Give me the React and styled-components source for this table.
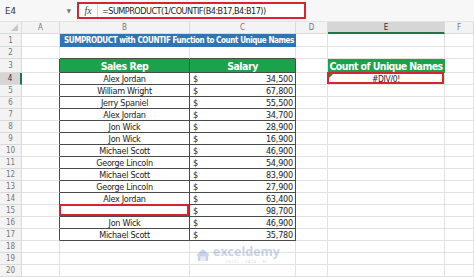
import React from "react";
import styled, { createGlobalStyle } from "styled-components";

const Global = createGlobalStyle`
  html, body { margin: 0; padding: 0; background: #fff; }
  body { width: 474px; height: 277px; overflow: hidden; }
`;

const FONT = `"Liberation Sans Narrow", "DejaVu Sans Condensed", Lato, sans-serif`;

const Page = styled.div`
  width: 474px;
  height: 277px;
  display: flex;
  flex-direction: column;
  background: #fff;
  font-family: ${FONT};
  overflow: hidden;
`;

const FormulaBar = styled.div`
  height: 22px;
  display: flex;
  align-items: center;
  background: #f7f7f7;
  border-bottom: 1px solid #e4e4e4;
  box-sizing: border-box;
`;

const NameBox = styled.div`
  width: 77px;
  height: 100%;
  display: flex;
  align-items: center;
  justify-content: space-between;
  padding: 0 6px 0 5px;
  box-sizing: border-box;
  font-size: 9.5px;
  color: #333;
`;

const Caret = styled.span`
  font-size: 6px;
  color: #777;
`;

const FormulaBox = styled.div`
  width: 229px;
  height: 17px;
  display: flex;
  align-items: center;
  border: 2px solid #d9232e;
  box-sizing: border-box;
  background: #fff;
`;

const Fx = styled.div`
  width: 18px;
  height: 100%;
  display: flex;
  align-items: center;
  justify-content: center;
  border-right: 1px solid #d4d4d4;
  font-family: "Liberation Serif", serif;
  font-style: italic;
  font-size: 10px;
  color: #444;
`;

const FormulaText = styled.div`
  padding-left: 4px;
  font-size: 9px;
  letter-spacing: -0.5px;
  color: #222;
  white-space: nowrap;
`;

const Grid = styled.div`
  flex: 1;
  display: grid;
  grid-template-columns: 22px 38px 130px 106px 32px 117px 1fr;
  grid-template-rows: 12px 13px 12px 14px repeat(17, 12px);
  position: relative;
`;

const ColHead = styled.div`
  background: ${(p) => (p.$sel ? "#d6d6d6" : "#f3f3f3")};
  border-right: 1px solid #dadada;
  border-bottom: ${(p) => (p.$sel ? "2px solid #217346" : "1px solid #dadada")};
  box-sizing: border-box;
  display: flex;
  align-items: center;
  justify-content: center;
  font-size: 8px;
  color: ${(p) => (p.$sel ? "#333" : "#777")};
  position: relative;
`;

const Corner = styled.div`
  position: absolute;
  right: 3px;
  bottom: 2px;
  width: 0;
  height: 0;
  border-left: 7px solid transparent;
  border-bottom: 7px solid #c8c8c8;
`;

const RowHead = styled.div`
  background: ${(p) => (p.$sel ? "#d6d6d6" : "#f3f3f3")};
  border-right: ${(p) => (p.$sel ? "2px solid #217346" : "1px solid #dadada")};
  border-bottom: 1px solid #dadada;
  box-sizing: border-box;
  display: flex;
  align-items: center;
  justify-content: center;
  font-size: 8px;
  color: ${(p) => (p.$sel ? "#333" : "#777")};
`;

const Cell = styled.div`
  box-sizing: border-box;
  border-right: 1px solid ${(p) => p.$br || "#e2e2e2"};
  border-bottom: 1px solid ${(p) => p.$bb || "#e2e2e2"};
  background: ${(p) => p.$bg || "#fff"};
  color: ${(p) => p.$color || "#222"};
  font-size: ${(p) => p.$size || 9}px;
  letter-spacing: ${(p) => (p.$ls === undefined ? -0.3 : p.$ls)}px;
  font-weight: ${(p) => (p.$bold ? 700 : 400)};
  display: flex;
  align-items: center;
  justify-content: ${(p) => p.$justify || "center"};
  padding: ${(p) => p.$pad || "0 2px"};
  white-space: nowrap;
  overflow: visible;
  position: relative;
  grid-column: ${(p) => p.$span || "auto"};
`;

const Dollar = styled.span`
  flex: 0 0 auto;
`;

const Amount = styled.span`
  margin-left: auto;
`;

const RedFrame = styled.div`
  position: absolute;
  left: -1px;
  top: -1px;
  right: 0;
  bottom: 0;
  border: 2px solid #d9232e;
  pointer-events: none;
`;

const ErrTri = styled.div`
  position: absolute;
  left: 1px;
  top: 1px;
  width: 0;
  height: 0;
  border-top: 4px solid #2e7d32;
  border-right: 4px solid transparent;
`;

const Watermark = styled.div`
  position: absolute;
  left: 195px;
  top: 224px;
  display: flex;
  align-items: center;
  gap: 2px;
  opacity: 0.32;
  pointer-events: none;
`;

const WmText = styled.div`
  display: flex;
  flex-direction: column;
  align-items: center;
  gap: 2px;
`;

const WmWord = styled.div`
  font-family: "Open Sans", sans-serif;
  font-weight: 700;
  font-size: 12.5px;
  line-height: 12px;
  color: #5b78b8;
`;

const WmTag = styled.div`
  font-family: "Open Sans", sans-serif;
  font-size: 3.5px;
  line-height: 4px;
  color: #5b78b8;
  letter-spacing: 0.8px;
`;

const GRID = "#e2e2e2";
const DARK = "#4a4a4a";
const GREEN = "#1aa34a";
const BLUE = "#2f75b5";

const rows = [
  ["Alex Jordan", "34,500"],
  ["William Wright", "67,800"],
  ["Jerry Spaniel", "55,500"],
  ["Alex Jordan", "34,700"],
  ["Jon Wick", "28,900"],
  ["Jon Wick", "16,900"],
  ["Michael Scott", "46,900"],
  ["George Lincoln", "54,900"],
  ["Michael Scott", "83,900"],
  ["George Lincoln", "27,900"],
  ["Alex Jordan", "63,400"],
  ["", "98,700"],
  ["Jon Wick", "46,900"],
  ["Michael Scott", "35,780"],
];

const cols = ["A", "B", "C", "D", "E", "F"];

export default function App() {
  const body = [];
  for (let r = 1; r <= 20; r++) {
    body.push(
      <RowHead key={`h${r}`} $sel={r === 4}>
        {r}
      </RowHead>
    );
    const inTable = r >= 3 && r <= 17;
    const aboveTable = r === 2;
    body.push(<Cell key={`a${r}`} $br={inTable ? DARK : GRID} />);
    if (r === 1) {
      body.push(
        <Cell
          key="b1"
          $span="span 2"
          $bg={BLUE}
          $color="#fff"
          $bold
          $size={8}
          $ls={-0.4}
          $justify="flex-start"
          $pad="0 4px"
          $br={BLUE}
          $bb={BLUE}
        >
          SUMPRODUCT with COUNTIF Function to Count Unique Names
        </Cell>
      );
    } else if (r === 3) {
      body.push(
        <Cell key="b3" $bg={GREEN} $color="#fff" $bold $size={10.5} $ls={-0.5} $br={DARK} $bb={DARK}>
          Sales Rep
        </Cell>,
        <Cell key="c3" $bg={GREEN} $color="#fff" $bold $size={10.5} $ls={-0.5} $br={DARK} $bb={DARK}>
          Salary
        </Cell>
      );
    } else if (inTable) {
      const [name, sal] = rows[r - 4];
      body.push(
        <Cell key={`b${r}`} $br={DARK} $bb={DARK}>
          {name}
          {r === 15 && <RedFrame />}
        </Cell>,
        <Cell key={`c${r}`} $br={DARK} $bb={DARK} $justify="space-between" $pad="0 2px 0 3px" $ls={-0.2}>
          <Dollar>$</Dollar>
          <Amount>{sal}</Amount>
        </Cell>
      );
    } else {
      body.push(
        <Cell key={`b${r}`} $bb={aboveTable ? DARK : GRID} />,
        <Cell key={`c${r}`} $bb={aboveTable ? DARK : GRID} />
      );
    }
    body.push(<Cell key={`d${r}`} />);
    if (r === 3) {
      body.push(
        <Cell key="e3" $bg={GREEN} $color="#fff" $bold $size={10.5} $ls={-0.6} $br={GREEN} $bb={GREEN}>
          Count of Unique Names
        </Cell>
      );
    } else if (r === 4) {
      body.push(
        <Cell key="e4" $size={8.5}>
          #DIV/0!
          <RedFrame />
          <ErrTri />
        </Cell>
      );
    } else {
      body.push(<Cell key={`e${r}`} />);
    }
    body.push(<Cell key={`f${r}`} />);
  }

  return (
    <>
      <Global />
      <Page>
        <FormulaBar>
          <NameBox>
            <span>E4</span>
            <Caret>▼</Caret>
          </NameBox>
          <FormulaBox>
            <Fx>fx</Fx>
            <FormulaText>=SUMPRODUCT(1/COUNTIF(B4:B17,B4:B17))</FormulaText>
          </FormulaBox>
        </FormulaBar>
        <Grid>
          <ColHead>
            <Corner />
          </ColHead>
          {cols.map((c) => (
            <ColHead key={c} $sel={c === "E"}>
              {c}
            </ColHead>
          ))}
          {body}
          <Watermark>
            <svg width="16" height="14" viewBox="0 0 17 15">
              <path d="M1 8 L8.5 1 L16 8 L14 8 L14 14 L3 14 L3 8 Z" fill="#5b78b8" />
              <path d="M5.5 14 L5.5 9 L11.5 9 L11.5 14 Z" fill="#fff" opacity="0.6" />
            </svg>
            <WmText>
              <WmWord>exceldemy</WmWord>
              <WmTag>EXCEL · DATA · BI</WmTag>
            </WmText>
          </Watermark>
        </Grid>
      </Page>
    </>
  );
}
